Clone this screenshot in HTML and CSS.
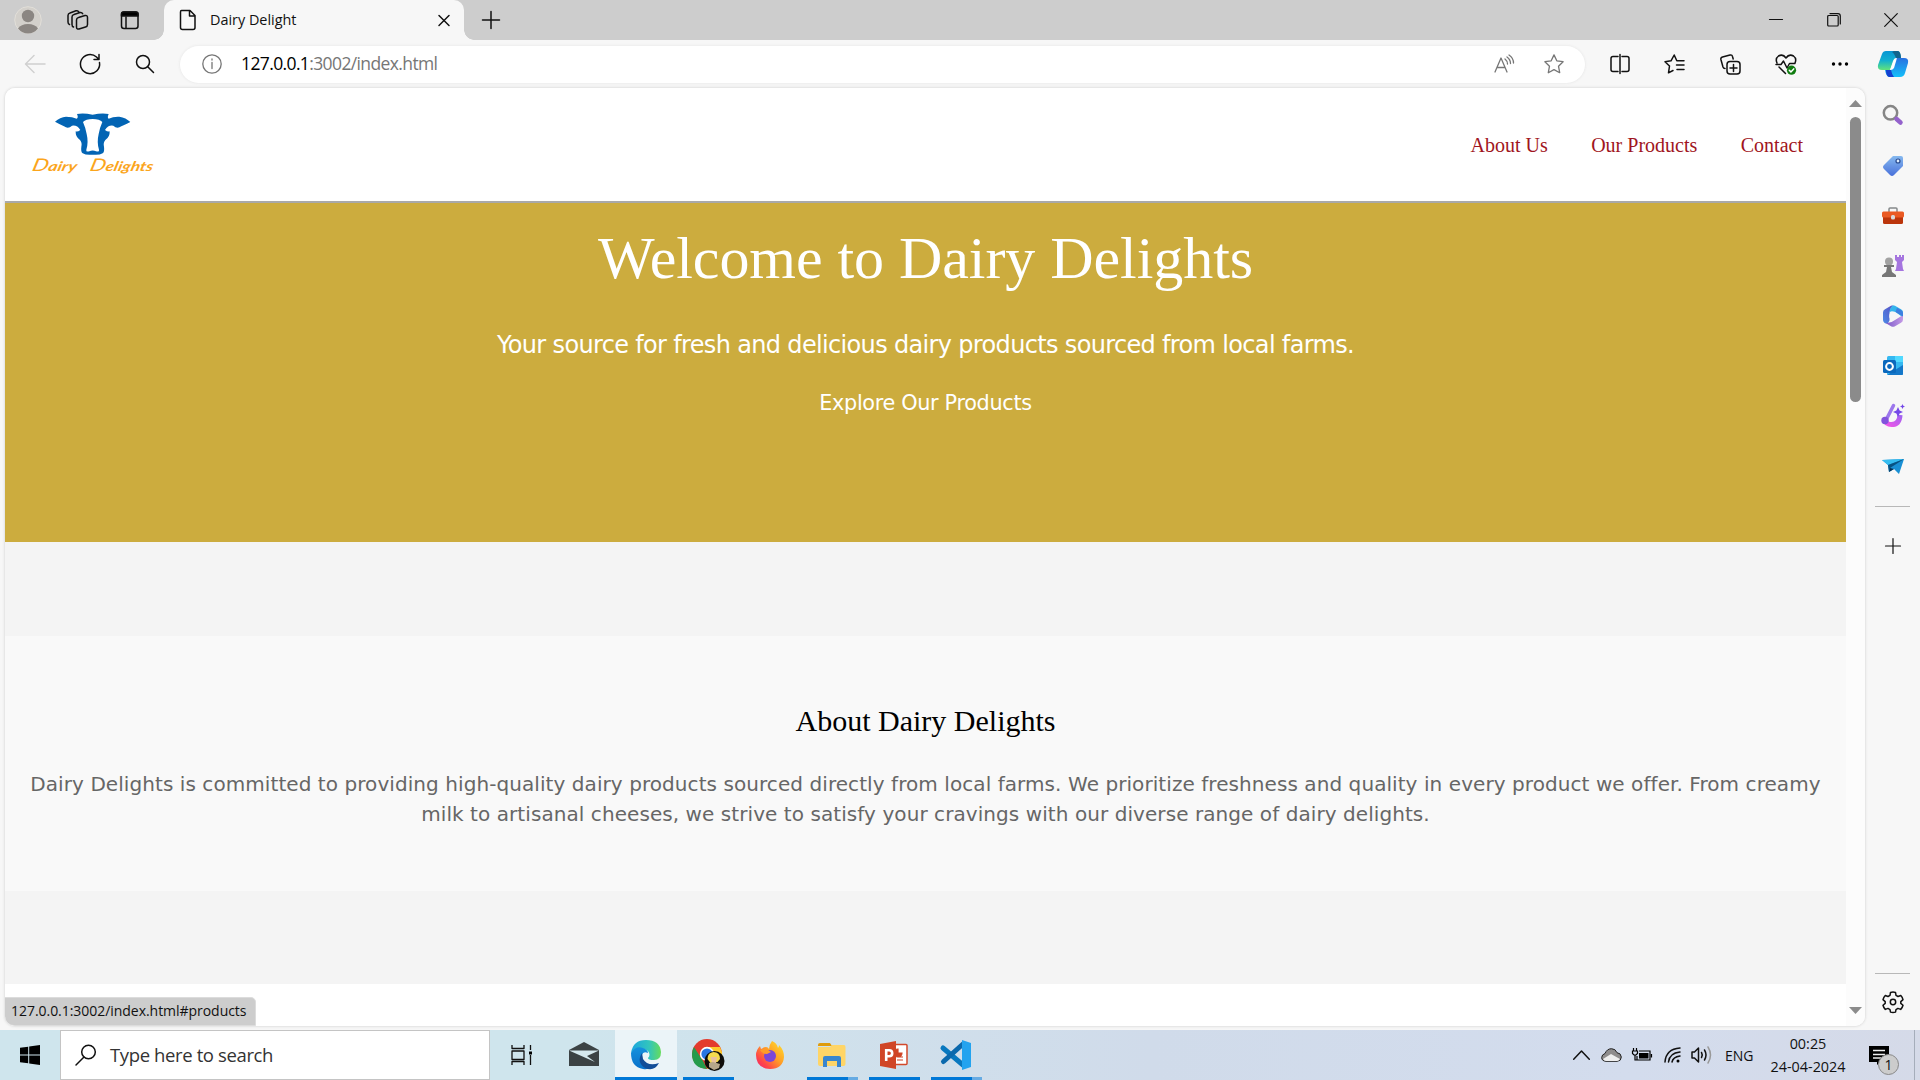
FILE: index.html
```html
<!DOCTYPE html>
<html lang="en">
<head>
<meta charset="utf-8">
<title>Dairy Delight</title>
<link rel="stylesheet" href="styles.css">
</head>
<body>
<div class="titlebar">
  <div class="title-tools">
    <svg width="28" height="28" viewBox="0 0 28 28"><circle cx="14" cy="14" r="13.3" fill="#d3d0cb" stroke="#e2dfd9"/><circle cx="14" cy="10" r="6.2" fill="#8b8682"/><path d="M4 22.500Q7 18 14 18t10 4.500Q20 27.500 14 27.500T4 22.500z" fill="#8b8682"/></svg>
    <svg width="22" height="22" viewBox="0 0 22 22" class="line"><path d="M11.500 8.500l6.500-2q2.500-.5 2.500 2v7q0 2-2 2.500l-6.500 2q-2.500.5-2.500-2v-7q0-2 2-2.500zM6.500 18Q5 17.500 5 15.500V8q0-2 2-2.500l6-2q2-.3 2.700 1.200M2.500 15.500Q1 15 1 13V6.500Q1 4.500 3 4l6-2.200q2-.5 2.700 1"/></svg>
    <svg width="20" height="20" viewBox="0 0 20 20" class="line"><rect x="1.500" y="2" width="16.500" height="16.500" rx="2.500"/><path d="M1.500 6V4q0-2 2-2H16q2 0 2 2v2z" fill="#000"/><path d="M6 7v11"/></svg>
  </div>
  <div class="tab">
    <svg width="18" height="22" viewBox="0 0 18 22" class="line doc"><path d="M2.500 1.500H11l5 5V18.500q0 2-2 2H3.500q-2 0-2-2V3q0-1.500 1-1.500zM10.500 1.500V7H16"/></svg>
    <span class="tab-title">Dairy Delight</span>
    <svg width="12" height="12" viewBox="0 0 12 12" class="line"><path d="M1 1.500l10 10M11 1.500L1 11.500"/></svg>
  </div>
  <svg class="newtab line" width="18" height="18" viewBox="0 0 18 18"><path d="M9 .5v17M.5 9h17"/></svg>
  <div class="win-buttons">
    <svg width="14" height="14" viewBox="0 0 14 14" class="line thin"><path d="M.5 6.500h13"/></svg>
    <svg width="14" height="14" viewBox="0 0 14 14" class="line thin"><rect x=".7" y="2.500" width="10.500" height="10.500" rx="1"/><path d="M3 .6h8q2.300 0 2.300 2.300V11"/></svg>
    <svg width="14" height="14" viewBox="0 0 14 14" class="line thin"><path d="M.7.7l12.600 12.600M13.300.7L.7 13.300"/></svg>
  </div>
</div>

<div class="browser">
  <div class="main">
    <div class="toolbar">
      <div class="nav-tools">
        <svg width="22" height="22" viewBox="0 0 22 22" class="line muted"><path d="M21 11H2M10 2.500L1.500 11l8.500 8.500"/></svg>
        <svg width="22" height="22" viewBox="0 0 22 22" class="line"><path d="M20.500 9.500a9.600 9.600 0 1 1-3-5.500L20 6.500M20 1.500v5h-5"/></svg>
        <svg width="20" height="20" viewBox="0 0 20 20" class="line"><circle cx="8" cy="8" r="6.500"/><path d="M13 13l5.500 5.500"/></svg>
      </div>
      <div class="address">
        <svg width="20" height="20" viewBox="0 0 20 20" class="line grey"><circle cx="10" cy="10" r="9.200"/><path d="M10 8.500v6M10 5v1"/></svg>
        <span class="url"><b>127.0.0.1</b>:3002/index.html</span>
        <svg width="20" height="20" viewBox="0 0 20 20" class="line grey"><path d="M1 18L7 4l6 14M3 13.500h8M11 5q2.500 2 2.500 5M13 3q3.500 2.500 3.500 6.500M15 1q4.500 3 4.500 8"/></svg>
        <svg width="20" height="20" viewBox="0 0 20 20" class="line grey"><path d="M10 .9l2.800 5.900 6.300.9-4.600 4.500 1.200 6.500L10 15.600l-5.700 3.100 1.200-6.500L.9 7.700l6.300-.9z"/></svg>
      </div>
      <div class="ext-tools">
        <svg width="20" height="20" viewBox="0 0 20 20" class="line"><path d="M8 2.500H3Q1 2.500 1 4.500v11q0 2 2 2h5M12 2.500h5q2 0 2 2v11q0 2-2 2h-5M10 .5v19"/></svg>
        <svg width="22" height="20" viewBox="0 0 22 20" class="line"><path d="M9 16.500l-4.500 2.300L5.500 12 1 7.700l6-.9L10.200 1l2.600 5.800H20M12.500 11H20M13 15.500h7"/></svg>
        <svg width="21" height="21" viewBox="0 0 21 21" class="line"><rect x="7" y="7.500" width="13" height="12.500" rx="3"/><path d="M13.500 10.500v7M10 14h7M5 14.500Q3.500 14.500 3 13L.9 5.500Q.5 3.500 2.500 3L10 1q2-.5 2.500 1.500l.7 2.500"/></svg>
        <svg width="22" height="21" viewBox="0 0 22 21" class="line"><path d="M2 9Q0 4.500 3.500 2 8-.5 11 4q3-4.500 7.500-2Q22 4.500 20 9M1 10.500h5L8.500 7l3.500 7 2.500-4.500H20M4 13l6.500 6.500"/><circle cx="16.500" cy="16.200" r="4.600" fill="#107c10" stroke="none"/><path d="M14.300 16.300l1.600 1.600 2.800-3" stroke="#fff"/></svg>
        <svg width="18" height="6" viewBox="0 0 18 6"><circle cx="2.500" cy="3" r="1.700"/><circle cx="9" cy="3" r="1.700"/><circle cx="15.500" cy="3" r="1.700"/></svg>
      </div>
    </div>

    <div class="viewport">
      <div class="site">
        <header class="site-header">
          <svg class="logo" width="125" height="66" viewBox="90 65 375 198" role="img" aria-label="Dairy Delights">
            <path fill="#0264b4" fill-rule="evenodd" d="M165 94Q180 81 198 79 218 79 230 85 236 82 231 71 250 67 278 73 306 67 326 71 321 82 326 85 340 78 358 79 378 82 391 95 376 103 364 108 351 117 340 106 325 103 315 119q8 6 14 4 1 17-13 26-7 8-4 20 2 15-4 20-10 6-30 4-20 2-30-4-6-5-4-20 3-12-4-20-14-9-13-26 6 2 14-4-10-16-25-13-11 11-24 2-12-6-27-14zM249 95q8 18 11 36 6 25-1 47-2 8 9 5 10-5 20 0 11 3 9-5-7-22-1-47 3-18 11-36-8-9-29-9t-29 9z"/>
            <g class="logo-text" transform="translate(0 242) skewX(-14)"><text x="94" y="0" textLength="134" lengthAdjust="spacingAndGlyphs"><tspan class="cap">D</tspan>airy</text><text x="267" y="0" textLength="190" lengthAdjust="spacingAndGlyphs"><tspan class="cap">D</tspan>elights</text></g>
          </svg>
          <nav class="site-nav"><a>About Us</a><a>Our Products</a><a>Contact</a></nav>
        </header>
        <section class="hero">
          <h1>Welcome to Dairy Delights</h1>
          <p>Your source for fresh and delicious dairy products sourced from local farms.</p>
          <a>Explore Our Products</a>
        </section>
        <section class="about">
          <h2>About Dairy Delights</h2>
          <p>Dairy Delights is committed to providing high-quality dairy products sourced directly from local farms. We prioritize freshness and quality in every product we offer. From creamy<br>milk to artisanal cheeses, we strive to satisfy your cravings with our diverse range of dairy delights.</p>
        </section>
        <section class="products"></section>
      </div>
      <div class="scrollbar">
        <svg width="13" height="7" viewBox="0 0 13 7"><path d="M0 7L6.500 0 13 7z" fill="#8b8b8b"/></svg>
        <div class="track"><div class="thumb"></div></div>
        <svg width="13" height="7" viewBox="0 0 13 7"><path d="M0 0h13L6.500 7z" fill="#8b8b8b"/></svg>
      </div>
      <div class="status">127.0.0.1:3002/index.html#products</div>
    </div>
  </div>

  <aside class="sidebar">
    <svg class="copilot" width="30" height="28" viewBox="0 0 30 28"><defs><linearGradient id="ca" x1="0" y1="0" x2="0" y2="1"><stop offset="0" stop-color="#0796d4"/><stop offset=".5" stop-color="#12b0d0"/><stop offset="1" stop-color="#62e37b"/></linearGradient><linearGradient id="cb" x1="0" y1="0" x2="0" y2="1"><stop offset="0" stop-color="#2870e0"/><stop offset="1" stop-color="#14c0fa"/></linearGradient></defs><path d="M8 1h12q2 0 3 7h-5q-2 0-3 3l-3 9H4q-5 0-4-5L4 4q1-3 4-3z" fill="url(#ca)"/><path d="M16 1h4q3 1 3 7h-5q-2-5-4-6z" fill="#11648d"/><path d="M18 8h8q5 0 4 5l-3 10q-1 4-5 4H11q-3-1-4-7h5q2 0 3-3z" fill="url(#cb)"/><path d="M8 20h5q1 5 3 7h-5q-3-1-3-7z" fill="#1640cf"/><path d="M16 10q1-2 3-2l-3 10q-1 2-4 2z" fill="#fff"/></svg>
    <svg width="22" height="22" viewBox="0 0 22 22"><circle cx="8.500" cy="7.800" r="6.700" fill="#f6f6f6" stroke="#858585" stroke-width="2.500"/><path d="M14.500 14l4 3.500" stroke="#9462cc" stroke-width="4.500" stroke-linecap="round"/></svg>
    <svg width="22" height="22" viewBox="0 0 22 22"><defs><linearGradient id="tg" x1="0" y1="0" x2="0" y2="1"><stop offset="0" stop-color="#86b9ef"/><stop offset="1" stop-color="#4870da"/></linearGradient></defs><path d="M11 1h8q2 0 2 2v8l-9 9q-2 2-4 0l-6-6q-2-2 0-4z" fill="url(#tg)"/><circle cx="16" cy="6" r="2" fill="#dcecff" stroke="#29498d" stroke-width="1.200"/></svg>
    <svg width="22" height="22" viewBox="0 0 22 22"><path d="M7 7V4q0-1 1-1h6q1 0 1 1v3" fill="none" stroke="#85898b" stroke-width="1.500"/><rect x="1" y="10" width="20" height="9" rx="1.500" fill="#bb350b"/><rect y="6.500" width="22" height="6" rx="1.500" fill="#ea5a23"/><rect x="9" y="10" width="4" height="4.500" rx="1.500" fill="#d9dadb"/></svg>
    <svg width="22" height="22" viewBox="0 0 22 22"><path d="M13 0h2v2h2V0h2v2h1V0h2v5l-2 2 1 7 1 2h-9l1-2 1-7-2-2z" fill="#a575df"/><circle cx="7" cy="6.500" r="4" fill="#a2a2a2"/><path d="M2 10h10v2H9l1 5 4 3v2H0v-2l4-3 1-5H2z" fill="#777"/></svg>
    <svg width="22" height="22" viewBox="0 0 22 22"><defs><linearGradient id="ml" x1="1" y1="0" x2="0" y2="1"><stop offset="0" stop-color="#5a4fc4"/><stop offset="1" stop-color="#4b8be6"/></linearGradient><linearGradient id="mb"><stop offset="0" stop-color="#7b59c9"/><stop offset="1" stop-color="#c49be6"/></linearGradient></defs><path d="M9 .8L3 4.200Q1 5.300 1 7.500v7q0 3 3 4 3-.5 3.500-3V7.500Q8 4 11 0.300z" fill="url(#ml)"/><path d="M9 .8q2-1.100 4 0l6 3.400q2 1.100 2 3.300v5L13.500 7Q8 5 7.500 8 7.500 3 11 .3z" fill="#35b4ec"/><path d="M21 8v6.500q0 2.200-2 3.300l-6 3.400q-2 1.100-4 0l-5.500-3.300q5.500.5 9.500-3L21 10z" fill="url(#mb)"/><path d="M13.500 7L21 11.500V8q0-2-2-3l-4-2.200z" fill="#3d7fe0"/><circle cx="11" cy="11" r="3.800" fill="#f7f7f7"/></svg>
    <svg width="22" height="22" viewBox="0 0 22 22"><rect x="5" y="1" width="16" height="19" rx="1.500" fill="#35b8f1"/><path d="M13 1h8v6h-8z" fill="#50d9ff"/><path d="M5 20L21 10v9q0 1-1 1z" fill="#1477c9"/><rect x="1" y="5" width="13" height="13" rx="1.500" fill="#0b69bd"/><circle cx="7.500" cy="11.500" r="3.400" fill="none" stroke="#fff" stroke-width="2"/></svg>
    <svg class="designer" width="24" height="24" viewBox="0 0 24 24"><defs><linearGradient id="dg" x1="0" y1="1" x2="1" y2="0"><stop offset="0" stop-color="#ef55e8"/><stop offset="1" stop-color="#a064f1"/></linearGradient></defs><path d="M4 16q1 4.500 6.500 4.500 8 0 8.500-9.500" fill="none" stroke="url(#dg)" stroke-width="5"/><path d="M12.500 1.500L4.500 17" stroke="#9c77ec" stroke-width="3.500" stroke-linecap="round"/><circle cx="4" cy="16.500" r="3.700" fill="#8253dc"/><path d="M17 3l1.600 3.400L22 8l-3.400 1.600L17 13l-1.600-3.400L12 8l3.400-1.600zM21.500 0l.8 1.700L24 2.500l-1.700.8-.8 1.700-.8-1.700-1.700-.8 1.700-.8z" fill="#7549e8"/></svg>
    <svg width="22" height="22" viewBox="0 0 22 22"><path d="M0 5l22-1-5 15-5-5-5 3-1-7z" fill="#198fd4"/><path d="M0 5l22-1L6 10z" fill="#36bdf0"/><path d="M6 10l16-6-14 9-1 4z" fill="#085282"/><path d="M7 17l1-4 4 1z" fill="#032f55"/></svg>
    <hr class="first">
    <svg class="plus line thin" width="16" height="16" viewBox="0 0 16 16"><path d="M8 .5v15M.5 8h15"/></svg>
    <hr class="second">
    <svg class="gear line" width="22" height="22" viewBox="0 0 22 22"><path d="M8.500 1.500Q11 .7 13.500 1.500L14 4.300l2 1.200 2.800-1Q20.500 6.200 21 8.600l-2.200 2v1.800l2.200 1.900q-.6 2.400-2.300 4.100l-2.800-1-1.900 1.200-.5 2.500q-2.500.8-5 0L8 18.600l-2-1.200-2.700 1Q1.600 16.700 1 14.300l2.200-1.900v-1.800L1 8.600q.6-2.400 2.300-4.100l2.700 1 2-1.200z"/><circle cx="11" cy="11" r="2.700"/></svg>
  </aside>
</div>

<footer class="taskbar">
  <div class="start"><svg width="20" height="20" viewBox="0 0 20 20"><path d="M0 2.800L8.200 1.700v7.800H0zM9.200 1.500L20 0v9.500H9.200zM0 10.500h8.200v7.800L0 17.200zM9.200 10.500H20V20L9.200 18.500z"/></svg></div>
  <div class="search"><svg width="22" height="22" viewBox="0 0 22 22" class="line"><circle cx="13.500" cy="8" r="6.800"/><path d="M9 13L1 21"/></svg><span>Type here to search</span></div>
  <div class="apps">
    <div class="app"><svg width="22" height="20" viewBox="0 0 22 20" class="line sharp"><path d="M1 0v3.500h12V0M1 20v-3.500h12V20M1 6h12v8.500H1zM19.500 0v5M19.500 10v10"/><path d="M18 6.500h3v3h-3z" fill="#000" stroke="none"/></svg></div>
    <div class="app"><svg class="mail" width="30" height="24" viewBox="0 0 30 24"><path d="M0 8L15 0l15 8v16H0z" fill="#3b4244"/><path d="M0 8.500h30L18 14l8 6z" fill="#d5e8ee"/></svg></div>
    <div class="app active"><svg width="30" height="30" viewBox="0 0 30 30"><defs><linearGradient id="eg"><stop offset="0" stop-color="#1ba5df"/><stop offset=".6" stop-color="#32c5bd"/><stop offset="1" stop-color="#66dc5b"/></linearGradient><linearGradient id="eb" x1="0" y1="0" x2="0" y2="1"><stop offset="0" stop-color="#1591dd"/><stop offset="1" stop-color="#0870ca"/></linearGradient></defs><path d="M0 13Q2 0 15 0q14 0 15 12 0 8-7 8-6 0-6-2 3-3 0-7Q10 5 0 13z" fill="url(#eg)"/><path d="M0 13Q5 5 12 8q5 2 5 5-5-2-6 2-1 8 9 12-3 3-8 2Q0 27 0 13z" fill="url(#eb)"/><path d="M11 13q-6 9 3 15 9 4 14-5-11 4-16-4z" fill="#114d98"/></svg></div>
    <div class="app run"><svg width="33" height="32" viewBox="0 0 33 32"><circle cx="15" cy="15" r="15" fill="#e33b2e"/><path d="M2 8l9 14 4 8Q0 29 0 15q0-4 2-7z" fill="#249b4b"/><path d="M15 8h13q5 10-1 16-5 6-12 6l7-12z" fill="#fdca2b"/><circle cx="15" cy="15" r="7.200" fill="#fff"/><circle cx="15" cy="15" r="5.600" fill="#2876e3"/><circle cx="22.500" cy="22" r="10" fill="#0d0d0a"/><path d="M15.500 20q0-6.500 6-7 6.500 0 6.500 7l-2.500 3-7 1z" fill="#f4db4e"/><path d="M18.500 18h6.500l-1 6h-4z" fill="#e7c19e"/><path d="M17 24l4-1 7 2-1 4-5 2-5-3z" fill="#b5a68a"/></svg></div>
    <div class="app"><svg width="28" height="28" viewBox="0 0 28 28"><defs><linearGradient id="fx" x1="1" y1="0" x2="0" y2="1"><stop offset="0" stop-color="#ffe82c"/><stop offset=".45" stop-color="#ff9d27"/><stop offset=".75" stop-color="#ff4748"/><stop offset="1" stop-color="#ed1f76"/></linearGradient></defs><path d="M16 0q5 2 6 7 1-1 1-3 5 5 5 12-1 12-14 12Q0 27 0 14q0-5 4-9l1 3q3-2 5-2 2 0 3 2 0-4 3-8z" fill="url(#fx)"/><circle cx="14" cy="15" r="6" fill="#7c46d8"/><path d="M4 9q6-3 11 2l-4 2q-5 0-7-4z" fill="#ff9c29"/></svg></div>
    <div class="app run multi"><svg width="28" height="24" viewBox="0 0 28 24"><path d="M0 2q0-2 2-2h10l2 3H0z" fill="#df9b0b"/><path d="M0 4h12l2-2h12q1.500 0 1.500 2v17q0 2-2 2H2q-2 0-2-2z" fill="#ffd567"/><path d="M5 24V15q0-2 2-2h14q2 0 2 2v9h-4v-6H9v6z" fill="#3986cf"/></svg></div>
    <div class="app run"><svg width="28" height="28" viewBox="0 0 28 28"><rect x="12" y="3.500" width="15" height="20" rx="1" fill="#fff" stroke="#d2492b" stroke-width="1.500"/><path d="M17 16h6M17 19h6M18 8a4 4 0 1 0 4 4h-4z" stroke="#d04526" fill="#d04526" stroke-width="1.200"/><path d="M0 3L16 0v28L0 25z" fill="#d04526"/><path d="M6.200 20V9.200h3q3 0 3 3t-3 3h-3" fill="none" stroke="#fff" stroke-width="2.600"/></svg></div>
    <div class="app run multi"><svg width="30" height="30" viewBox="0 0 30 30"><path d="M2 8L22 25" stroke="#0878bf" stroke-width="5" stroke-linecap="round"/><path d="M2.500 21.500L22 4" stroke="#0b69ad" stroke-width="5" stroke-linecap="round"/><path d="M21 0l9 3v24l-9 3z" fill="#23a3ef"/></svg></div>
  </div>
  <div class="tray">
    <svg class="chev line" width="17" height="10" viewBox="0 0 17 10"><path d="M.7 9.200L8.500 1l7.800 8.200"/></svg>
    <svg class="cloud" width="21" height="14" viewBox="0 0 21 14"><path d="M5 13.300Q.7 13 .7 9.500.8 6.500 4 5.500 6 .7 10.500.7q4 0 5.500 4 4 .3 4.300 4.300 0 4-4 4.300z" fill="#8f8d8d" stroke="#222"/><path d="M2 11l8-5 9 5q-1 2-3 2H5q-2 0-3-2z" fill="#eee"/></svg>
    <svg class="batt" width="21" height="14" viewBox="0 0 21 14"><path d="M7 3h11v9H5V8M19.500 6v3.500M1.500 0v3M4.500 0v3M.5 3h5v2.500l-1.500 1.500h-2l-1.500-1.500zM3 7v5h2" fill="none" stroke="#000" stroke-width="1.200"/><path d="M7 5h9.500v5.500H7z"/></svg>
    <svg class="wifi line" width="17" height="16" viewBox="0 0 17 16"><path d="M1 15Q2 2 16 1M4.500 15Q5.500 6 16 5M8 15q1-5 8-6"/><circle cx="14" cy="14" r="1.500" fill="#000" stroke="none"/></svg>
    <svg class="vol line" width="21" height="18" viewBox="0 0 21 18"><path d="M1 6h2.500l4-4v14l-4-4H1zM10.500 6.500q1.500 2.500 0 5M13.500 4q3 5 0 10"/><path d="M17 1q5 8 0 16" stroke="#999"/></svg>
    <span class="lang">ENG</span>
    <div class="clock"><span>00:25</span><span>24-04-2024</span></div>
    <div class="notice"><svg width="21" height="19" viewBox="0 0 21 19"><path d="M0 0h20v16H11l-3 3v-3H0z"/><path d="M4 4.500h12M4 8.500h12M4 12h8" stroke="#eee" stroke-width="1.300"/></svg><span class="badge">1</span></div>
  </div>
  <div class="desktop-edge"></div>
</footer>
</body>
</html>
```
FILE: styles.css
```css
* { box-sizing: border-box; }
body { margin: 0; width: 1920px; height: 1080px; overflow: hidden; display: flex; flex-direction: column; background: #f7f7f7; font-family: "Open Sans", "Noto Sans", sans-serif; }
svg { display: block; flex: none; overflow: visible; }
.line { fill: none; stroke: #111; stroke-width: 1.5; stroke-linecap: round; stroke-linejoin: round; }
.line.thin { stroke-width: 1.2; }
.line.sharp { stroke-linecap: butt; stroke-width: 1.3; }
.line.grey { stroke: #767676; stroke-width: 1.3; }
.line.muted { stroke: #d0d0d0; }

/* Window title bar */
.titlebar { height: 40px; flex: none; display: flex; align-items: center; background: #cdcdcd; }
.title-tools { width: 164px; height: 40px; display: flex; align-items: center; gap: 25px; padding-left: 14px; }
.title-tools svg:nth-child(3) { margin-left: 6px; }
.tab { position: relative; width: 300px; height: 40px; display: flex; align-items: center; padding: 0 14px 0 15px; background: #f7f7f7; border-radius: 10px 10px 0 0; }
.tab::before, .tab::after { content: ""; position: absolute; bottom: 0; width: 10px; height: 10px; }
.tab::before { left: -10px; background: radial-gradient(circle at 0 0, #cdcdcd 9.5px, #f7f7f7 10px); }
.tab::after { right: -10px; background: radial-gradient(circle at 100% 0, #cdcdcd 9.5px, #f7f7f7 10px); }
.tab-title { flex: 1; margin-left: 13px; padding-bottom: 2px; font-size: 14.4px; color: #111; }
.newtab { margin-left: 18px; }
.win-buttons { margin-left: auto; display: flex; gap: 43.500px; padding-right: 22px; }

/* Browser body */
.browser { height: 990px; flex: none; display: flex; }
.main { width: 1865px; padding-left: 5px; }
.toolbar { height: 48px; display: flex; align-items: center; }
.nav-tools { width: 175px; display: flex; align-items: center; gap: 33px; padding-left: 19px; }
.nav-tools svg:nth-child(3) { margin-left: 1px; }
.address { width: 1405px; height: 37px; display: flex; align-items: center; padding: 0 21px 0 22px; background: #fff; border-radius: 19px; box-shadow: 0 0 3px #e3e3e3; }
.url { flex: 1; margin-left: 19px; padding-bottom: 2px; font-size: 17.500px; letter-spacing: -.62px; color: #767676; }
.url b { font-weight: 400; color: #000; }
.address svg:last-child { margin-left: 30px; }
.ext-tools { flex: 1; display: flex; align-items: center; justify-content: space-between; padding: 0 16px 0 25px; }

.viewport { position: relative; height: 938px; display: flex; overflow: hidden; border-radius: 10px; background: #fff; box-shadow: 0 0 3px #c8c8c8; }
.site { width: 1841px; background: #f4f4f4; display: flex; flex-direction: column; }
.site-header { height: 115px; flex: none; display: flex; justify-content: space-between; align-items: center; padding: 0 43px 0 25px; background: #fff; border-bottom: 2px solid #a9a9a9; }
.logo-text { font: italic 700 40px Lato, sans-serif; fill: #fba51c; }
.logo-text .cap { font-size: 52px; font-weight: 400; }
.site-nav { display: flex; gap: 43.500px; font: 20px/22px "Liberation Serif", serif; color: #9f1521; }
.hero { height: 339px; flex: none; display: flex; flex-direction: column; align-items: center; background: #ccac3e; color: #fff; font-family: "DejaVu Sans", sans-serif; white-space: nowrap; }
.hero h1 { margin: 20px 0 0; font: 400 60px/70px "Liberation Serif", serif; letter-spacing: -.06px; }
.hero p { margin: 38px 0 0; font-size: 24px; line-height: 28px; letter-spacing: -.66px; }
.hero a { margin-top: 32px; font-size: 20.800px; line-height: 24px; letter-spacing: -.33px; }
.about { margin-top: 94px; height: 255px; flex: none; text-align: center; background: #f9f9f9; font-family: "DejaVu Sans", sans-serif; white-space: nowrap; }
.about h2 { margin: 0; padding-top: 67px; font: 400 30px/36px "Liberation Serif", serif; color: #000; }
.about p { margin: 30px 0 0; font-size: 20px; line-height: 30px; letter-spacing: .07px; color: #666; }
.products { margin-top: 93px; flex: 1; background: #fff; }

.scrollbar { width: 19px; display: flex; flex-direction: column; align-items: center; padding: 12px 0; background: #fcfcfc; }
.track { flex: 1; padding-top: 10px; }
.thumb { width: 11px; height: 285px; border-radius: 6px; background: #8b8b8b; }
.status { position: absolute; left: -1px; bottom: 0; width: 252px; height: 29px; padding-left: 6px; border: 1px solid #dcdcdc; border-radius: 0 5px 0 10px; background: #cdcdcd; color: #111; font-size: 14px; line-height: 26px; letter-spacing: -.04px; white-space: nowrap; }

/* Right-hand app sidebar */
.sidebar { flex: 1; display: flex; flex-direction: column; align-items: center; padding: 10px 0 0; gap: 28px; }
.sidebar .copilot { margin-bottom: -1px; }
.sidebar .designer { margin: -1px 0; }
.sidebar hr { width: 35px; height: 1px; flex: none; margin: 0; border: 0; background: #b8b8b8; }
.sidebar .first { margin-top: 1px; }
.sidebar .plus { margin-top: 3px; }
.sidebar .second { margin-top: auto; }
.sidebar .gear { margin: -11px 0 17px; }

/* Taskbar */
.taskbar { height: 50px; flex: none; display: flex; background: linear-gradient(90deg, #cfe5ed 0%, #cfe5ed 30%, #d0dbea 60%, #d3dced 85%, #d5dae8 100%); }
.start { width: 60px; display: flex; align-items: center; justify-content: center; }
.search { width: 430px; display: flex; align-items: center; gap: 13px; padding-left: 14px; border: 1px solid #c4c4c4; background: #fff; color: #333; font-size: 18.500px; letter-spacing: -.38px; }
.search span { padding-bottom: 2px; }
.apps { display: flex; margin-left: 1px; }
.app { position: relative; width: 62px; display: flex; align-items: center; justify-content: center; }
.mail { margin-bottom: 2px; }
.app.active { background: #ebf4f8; }
.app.active::after, .app.run::after { content: ""; position: absolute; bottom: 0; left: 5.500px; width: 51px; height: 3px; background: #0078d7; }
.app.active::after { left: 0; width: 62px; }
.app.multi::after { background: linear-gradient(90deg, #0078d7 41px, #66abe3 41px); }
.tray { margin-left: auto; margin-right: 8px; display: flex; align-items: center; color: #111; font-size: 14px; }
.cloud { margin-left: 11px; }
.batt { margin-left: 10px; }
.wifi { margin-left: 11px; }
.vol { margin-left: 10px; }
.lang { margin-left: 13px; width: 29px; }
.clock { width: 80px; margin-left: 14px; display: flex; flex-direction: column; align-items: center; font-size: 14.400px; line-height: 23px; }
.notice { position: relative; width: 37px; margin-left: 21px; }
.badge { position: absolute; left: 9px; top: 8px; width: 21px; height: 21px; border: 1px solid #888; border-radius: 50%; background: #ccc; text-align: center; font-size: 14px; line-height: 19px; }
.desktop-edge { width: 6px; border-left: 1px solid #a5adba; }
```
